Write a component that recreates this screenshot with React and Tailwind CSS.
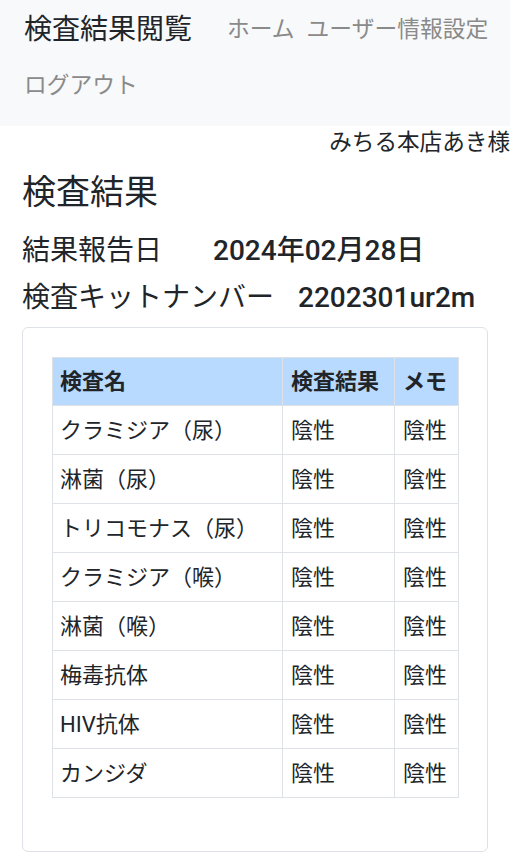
const rows = [
  "クラミジア（尿）",
  "淋菌（尿）",
  "トリコモナス（尿）",
  "クラミジア（喉）",
  "淋菌（喉）",
  "梅毒抗体",
  "HIV抗体",
  "カンジダ",
];

const App = () => {
  return (
    <div className="min-h-[868px] bg-white text-[#212529] font-['Roboto','Noto_Sans_CJK_JP',sans-serif]">
      {/* Navbar */}
      <nav className="bg-[#f8f9fa] h-[126px] pt-[8px] pl-[24px]">
        <div className="flex items-center h-[44px]">
          <span className="text-[28px] leading-[44px] text-[#212529]">検査結果閲覧</span>
          <a className="ml-[35px] text-[22.75px] leading-[44px] text-[#8a8a8a]">ホーム</a>
          <a className="ml-[12px] text-[22.75px] leading-[44px] text-[#8a8a8a] whitespace-nowrap">ユーザー情報設定</a>
        </div>
        <div className="mt-[12px] h-[44px] flex items-center">
          <a className="text-[22.75px] leading-[44px] text-[#8a8a8a]">ログアウト</a>
        </div>
      </nav>

      <div className="pt-[4px]">
        <div className="text-right text-[22.6px] leading-[26px] whitespace-nowrap">みちる本店あき様</div>
      </div>

      <div className="px-[22px]">
        <h1 className="mt-[16px] text-[34px] leading-[40px]">検査結果</h1>
        <div className="mt-[16px] text-[28px] leading-[46px] whitespace-nowrap">
          結果報告日<span className="ml-[51px] font-medium">2024年02月28日</span>
        </div>
        <div className="mt-[1px] text-[28px] leading-[46px] whitespace-nowrap">
          検査キットナンバー<span className="ml-[24px] font-medium">2202301ur2m</span>
        </div>

        <div className="mt-[6px] w-[466px] border border-[#dee2e6] rounded-[6px] pt-[29px] px-[29px] pb-[29px]">
          <table className="table-fixed w-[406px] border-collapse mb-[24px] text-[22px]">
            <colgroup>
              <col className="w-[230px]" />
              <col className="w-[112px]" />
              <col className="w-[64px]" />
            </colgroup>
            <thead>
              <tr className="bg-[#b8daff]">
                <th className="h-[48px] border border-[#dee2e6] px-[7px] text-left font-bold">検査名</th>
                <th className="h-[48px] border border-[#dee2e6] px-[8px] text-left font-bold whitespace-nowrap">検査結果</th>
                <th className="h-[48px] border border-[#dee2e6] px-[8px] text-left font-bold whitespace-nowrap">メモ</th>
              </tr>
            </thead>
            <tbody>
              {rows.map((name) => (
                <tr key={name}>
                  <td className="h-[49px] border border-[#dee2e6] px-[7px] whitespace-nowrap">{name}</td>
                  <td className="h-[49px] border border-[#dee2e6] px-[8px]">陰性</td>
                  <td className="h-[49px] border border-[#dee2e6] px-[8px]">陰性</td>
                </tr>
              ))}
            </tbody>
          </table>
        </div>
      </div>
    </div>
  );
};

export default App;
